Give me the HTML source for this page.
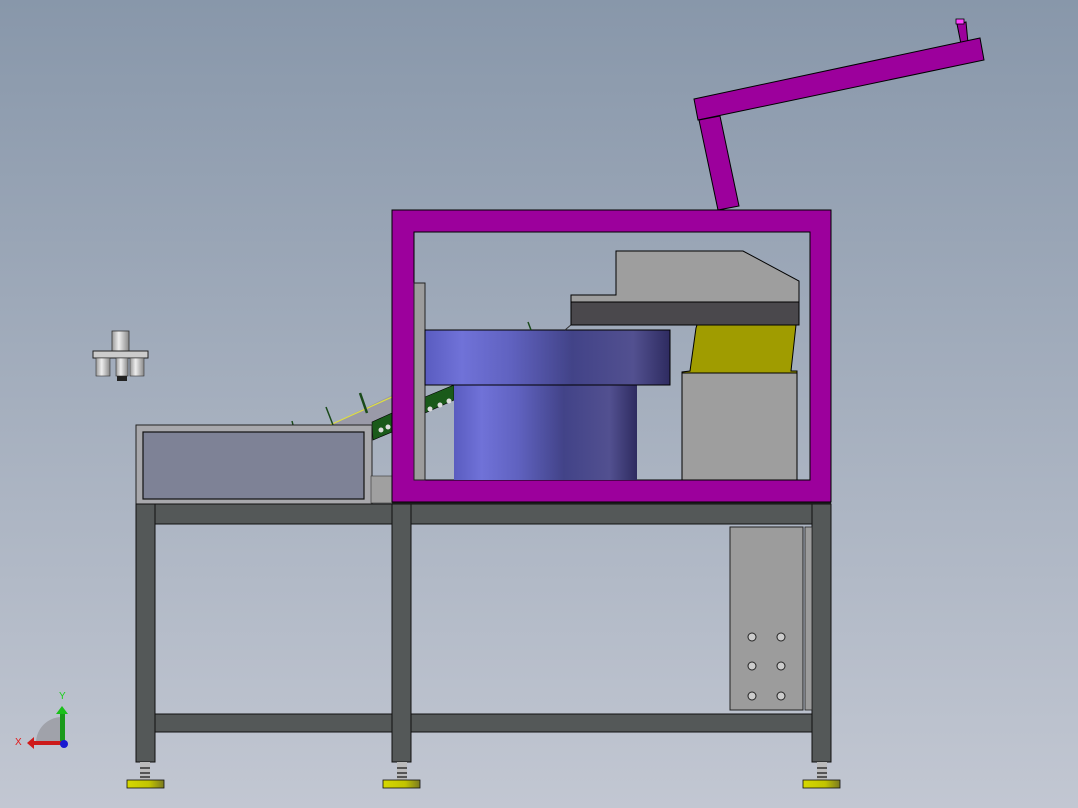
<!DOCTYPE html>
<html><head><meta charset="utf-8"><style>
html,body{margin:0;padding:0;width:1078px;height:808px;overflow:hidden}
svg{display:block}
</style></head><body>
<svg width="1078" height="808" viewBox="0 0 1078 808" xmlns="http://www.w3.org/2000/svg" font-family="Liberation Sans, sans-serif">
<defs>
<linearGradient id="bg" x1="0" y1="0" x2="0" y2="1">
<stop offset="0" stop-color="#8897aa"/><stop offset="1" stop-color="#c2c7d2"/>
</linearGradient>
<linearGradient id="bowl" x1="0" y1="0" x2="1" y2="0">
<stop offset="0" stop-color="#5a5cc0"/><stop offset="0.15" stop-color="#7072d8"/><stop offset="0.35" stop-color="#6062c0"/><stop offset="0.6" stop-color="#424388"/><stop offset="0.85" stop-color="#525090"/><stop offset="1" stop-color="#2e2b60"/>
</linearGradient>
<linearGradient id="foot" x1="0" y1="0" x2="1" y2="0">
<stop offset="0" stop-color="#d6d800"/><stop offset="0.6" stop-color="#c2c400"/><stop offset="1" stop-color="#7a7a20"/>
</linearGradient>
<linearGradient id="cyl" x1="0" y1="0" x2="1" y2="0">
<stop offset="0" stop-color="#999"/><stop offset="0.4" stop-color="#eee"/><stop offset="1" stop-color="#888"/>
</linearGradient>
</defs>
<rect width="1078" height="808" fill="url(#bg)"/>

<!-- arm -->
<polygon points="957,24 966,22 968,43 961,44" fill="#9c009c" stroke="#000" stroke-width="1"/>
<rect x="956" y="19" width="8" height="5" fill="#ff44ff" stroke="#000" stroke-width="0.8"/>
<polygon points="694,99 980,38 984,60 698,120" fill="#9c009c" stroke="#000" stroke-width="1"/>
<polygon points="699,120 720,116 739,206 718,210" fill="#9c009c" stroke="#000" stroke-width="1"/>

<!-- left hopper tool -->
<rect x="112" y="331" width="17" height="20" fill="url(#cyl)" stroke="#333" stroke-width="0.8"/>
<rect x="93" y="351" width="55" height="7" fill="#ccc" stroke="#222" stroke-width="1"/>
<rect x="96" y="358" width="14" height="18" fill="url(#cyl)" stroke="#333" stroke-width="0.6"/>
<rect x="116" y="358" width="12" height="18" fill="url(#cyl)" stroke="#333" stroke-width="0.6"/>
<rect x="130" y="358" width="14" height="18" fill="url(#cyl)" stroke="#333" stroke-width="0.6"/>
<rect x="117" y="376" width="10" height="5" fill="#222"/>

<!-- chute -->
<polygon points="330,425 392,395 392,413 372,425" fill="#9a9aa8"/>
<line x1="330" y1="425" x2="392" y2="397" stroke="#e0e040" stroke-width="1.2"/>
<polygon points="372,422 392,413 392,432 373,440" fill="#1a5a1a" stroke="#000" stroke-width="0.6"/>
<polygon points="425,397 454,385 454,400 425,413" fill="#1a5a1a" stroke="#000" stroke-width="0.6"/>
<g fill="#ddd"><circle cx="381" cy="430" r="2.5"/><circle cx="388" cy="427" r="2.5"/><circle cx="430" cy="409" r="2.5"/><circle cx="440" cy="405" r="2.5"/><circle cx="449" cy="401" r="2.5"/></g>
<line x1="326" y1="407" x2="333" y2="425" stroke="#1a4a1a" stroke-width="1.5"/>
<line x1="360" y1="393" x2="367" y2="413" stroke="#1a4a1a" stroke-width="2.5"/>
<line x1="292" y1="421" x2="293" y2="425" stroke="#1a4a1a" stroke-width="1.5"/>

<!-- left box -->
<rect x="136" y="425" width="236" height="79" fill="#a8a8ac" stroke="#222" stroke-width="1"/>
<rect x="143" y="432" width="221" height="67" fill="#7e8296" stroke="#111" stroke-width="1.2"/>
<rect x="371" y="476" width="22" height="27" fill="#a0a0a0" stroke="#333" stroke-width="0.6"/>

<!-- table -->
<g fill="#545858" stroke="#111" stroke-width="1">
<rect x="136" y="504" width="695" height="20"/>
<rect x="136" y="714" width="695" height="18"/>
<rect x="136" y="504" width="19" height="258"/>
<rect x="392" y="504" width="19" height="258"/>
<rect x="812" y="504" width="19" height="258"/>
</g>
<!-- feet -->
<g>
<rect x="140" y="762" width="10" height="18" fill="#bbb"/>
<rect x="397" y="762" width="10" height="18" fill="#bbb"/>
<rect x="817" y="762" width="10" height="18" fill="#bbb"/>
<g stroke="#111" stroke-width="1.2">
<line x1="140" y1="768" x2="150" y2="768"/><line x1="140" y1="773" x2="150" y2="773"/><line x1="140" y1="777" x2="150" y2="777"/>
<line x1="397" y1="768" x2="407" y2="768"/><line x1="397" y1="773" x2="407" y2="773"/><line x1="397" y1="777" x2="407" y2="777"/>
<line x1="817" y1="768" x2="827" y2="768"/><line x1="817" y1="773" x2="827" y2="773"/><line x1="817" y1="777" x2="827" y2="777"/>
</g>
<rect x="127" y="780" width="37" height="8" fill="url(#foot)" stroke="#111" stroke-width="0.8"/>
<rect x="383" y="780" width="37" height="8" fill="url(#foot)" stroke="#111" stroke-width="0.8"/>
<rect x="803" y="780" width="37" height="8" fill="url(#foot)" stroke="#111" stroke-width="0.8"/>
</g>

<!-- right panel -->
<rect x="730" y="527" width="73" height="183" fill="#9c9c9c" stroke="#222" stroke-width="1"/>
<rect x="805" y="527" width="7" height="183" fill="#9c9c9c" stroke="#222" stroke-width="0.8"/>
<g fill="#ccc" stroke="#222" stroke-width="1">
<circle cx="752" cy="637" r="4"/><circle cx="781" cy="637" r="4"/>
<circle cx="752" cy="666" r="4"/><circle cx="781" cy="666" r="4"/>
<circle cx="752" cy="696" r="4"/><circle cx="781" cy="696" r="4"/>
</g>

<!-- magenta frame -->
<path d="M392,210 H831 V502 H392 Z M414,232 V480 H810 V232 Z" fill="#9c009c" fill-rule="evenodd" stroke="#000" stroke-width="1"/>
<line x1="392" y1="503" x2="831" y2="503" stroke="#222" stroke-width="1"/>

<!-- inner -->
<rect x="414" y="283" width="11" height="197" fill="#9c9c9c" stroke="#222" stroke-width="1"/>
<rect x="454" y="385" width="183" height="95" fill="url(#bowl)"/>
<rect x="425" y="330" width="245" height="55" fill="url(#bowl)" stroke="#000" stroke-width="1"/>
<line x1="528" y1="322" x2="531" y2="330" stroke="#1a4a1a" stroke-width="1.5"/>
<line x1="565" y1="330" x2="572" y2="324" stroke="#333" stroke-width="1"/>
<rect x="682" y="373" width="115" height="107" fill="#9e9e9e" stroke="#000" stroke-width="1"/>
<polygon points="682,325 697,325 696,328 690,371 682,372 682,373 797,373 797,371 791,371 796,325 682,325" fill="#a09c00" stroke="#000" stroke-width="1"/>
<polygon points="616,251 743,251 799,281 799,302 571,302 571,295 616,295" fill="#9e9e9e" stroke="#000" stroke-width="1"/>
<rect x="571" y="302" width="228" height="23" fill="#4a484c" stroke="#000" stroke-width="1"/>

<!-- triad -->
<path d="M62,717 A26,26 0 0 0 36,743 L62,743 Z" fill="#a0a2aa"/>
<rect x="60" y="713" width="5" height="30" fill="#1a9a1a"/>
<polygon points="56,714 62,706 68,714" fill="#1ac01a"/>
<rect x="34" y="741" width="28" height="4" fill="#cc1a1a"/>
<polygon points="34,737 27,743 34,749" fill="#d01a1a"/>
<circle cx="64" cy="744" r="4" fill="#1a1ad0"/>
<text x="59" y="699" font-size="10" fill="#1ad01a">Y</text>
<text x="15" y="745" font-size="10" fill="#e01a1a">X</text>
</svg>
</body></html>
